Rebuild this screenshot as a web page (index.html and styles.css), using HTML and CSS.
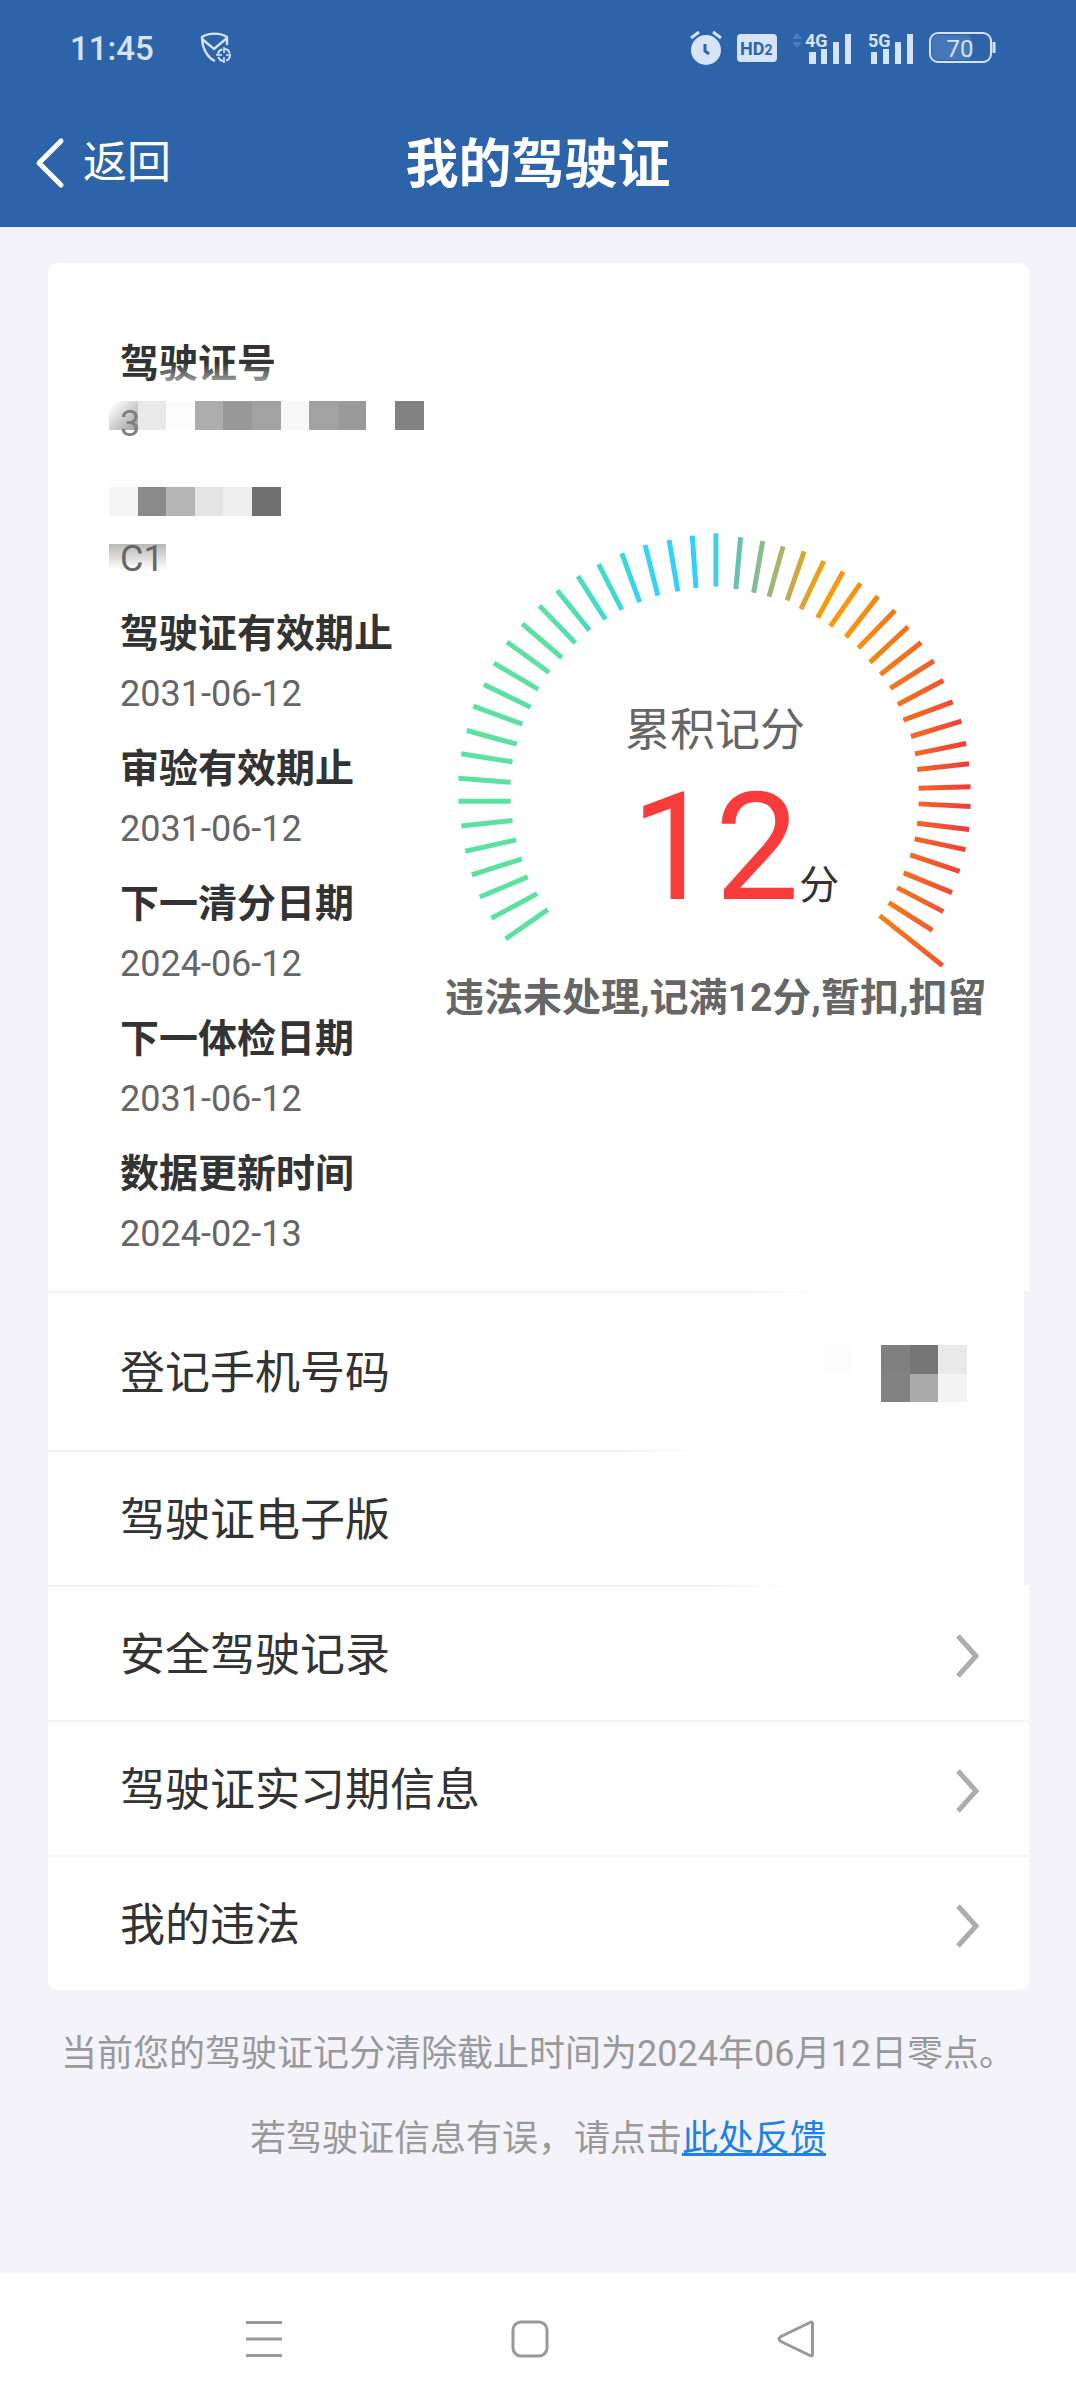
FILE: index.html
```html
<!DOCTYPE html>
<html lang="zh-CN">
<head>
<meta charset="utf-8">
<meta name="viewport" content="width=device-width, initial-scale=1">
<title>我的驾驶证</title>
<link rel="stylesheet" href="styles.css">
</head>
<body>
<header class="header">
  <div class="status">
    <div class="status-group">
      <span class="time">11:45</span>
      <svg class="icon" width="32" height="32" viewBox="0 0 32 32" fill="none" stroke="currentColor" stroke-width="2.4">
        <path d="M15 29C8 26 2 17 2 5C9 .5 20 .5 27 5V13M2 7L14 17L27 6"/>
        <circle cx="24" cy="23" r="6" stroke-width="2" stroke-dasharray="7 2.4"/>
        <path d="M24 15V21M24 25V31M16 23H22M26 23H31" stroke-width="1.6"/>
      </svg>
    </div>
    <div class="status-group status-right">
      <svg class="icon" width="32" height="34" viewBox="0 0 32 34">
        <circle cx="16" cy="19" r="15" fill="currentColor"/>
        <path d="M1 7L9 1M31 7L23 1" stroke="currentColor" stroke-width="3"/>
        <path d="M15 13V20L19 23" fill="none" stroke="#2d64a9" stroke-width="3"/>
      </svg>
      <svg class="icon" width="40" height="28" viewBox="0 0 40 28">
        <rect width="40" height="28" rx="4" fill="currentColor"/>
        <text class="hd" x="3" y="21">HD<tspan class="hd-sub">2</tspan></text>
      </svg>
      <svg class="icon" width="60" height="42" viewBox="0 0 60 42">
        <path d="M0 12L5 6L10 12ZM0 15L5 21L10 15Z" fill="#4a80bd"/>
        <path d="M17 25h7v12h-7zM29 22h6v15h-6zM41 15h6v22h-6zM53 7h6v30h-6z" fill="currentColor"/>
        <text class="net" x="13" y="20">4G</text>
      </svg>
      <svg class="icon" width="47" height="42" viewBox="0 0 47 42">
        <path d="M4 25h6v12h-6zM16 22h6v15h-6zM28 15h6v22h-6zM40 7h6v30h-6z" fill="currentColor"/>
        <text class="net" x="1" y="20">5G</text>
      </svg>
      <svg class="icon" width="67" height="32" viewBox="0 0 67 32">
        <rect x="1" y="1" width="61" height="29" rx="8" fill="none" stroke="currentColor" stroke-width="2"/>
        <rect x="3" y="3" width="40" height="25" rx="6" fill="#4577b8"/>
        <path d="M65 10V21" stroke="currentColor" stroke-width="3"/>
        <text class="battery" x="31" y="25" text-anchor="middle">70</text>
      </svg>
    </div>
  </div>
  <div class="titlebar">
    <button class="back" type="button">
      <svg width="30" height="52" viewBox="0 0 30 52" fill="none" stroke="currentColor" stroke-width="5" stroke-linecap="round" stroke-linejoin="round"><path d="M26 4L4 26L26 48"/></svg>
      返回
    </button>
    <h1 class="title">我的驾驶证</h1>
  </div>
</header>

<main class="main">
  <section class="card">
    <div class="info">
      <dl class="fields">
        <div class="field">
          <dt class="label fading">驾驶证号</dt>
          <dd class="value">
            <svg class="mosaic mosaic-number" width="315" height="29" viewBox="0 0 315 29" shape-rendering="crispEdges">
              <defs><linearGradient id="m1" x1="0" y1="0" x2="1" y2="1"><stop offset="0.1" stop-color="#fff"/><stop offset="1" stop-color="#9c9c9c"/></linearGradient></defs>
              <rect width="29" height="29" fill="url(#m1)"/>
              <rect x="29" width="28" height="29" fill="#e9e9e9"/>
              <rect x="57" width="29" height="29" fill="#fdfdfd"/>
              <rect x="86" width="28" height="29" fill="#adadad"/>
              <rect x="114" width="29" height="29" fill="#989898"/>
              <rect x="143" width="29" height="29" fill="#a2a2a2"/>
              <rect x="172" width="28" height="29" fill="#f8f8f8"/>
              <rect x="200" width="29" height="29" fill="#a2a2a2"/>
              <rect x="229" width="28" height="29" fill="#9a9a9a"/>
              <rect x="286" width="29" height="29" fill="#828282"/>
            </svg>
            <span class="value-text value-masked">3</span>
          </dd>
        </div>
        <div class="field">
          <dt class="label">
            <svg class="mosaic mosaic-label" width="172" height="29" viewBox="0 0 172 29" shape-rendering="crispEdges">
              <rect width="29" height="29" fill="#f5f5f5"/>
              <rect x="29" width="28" height="29" fill="#8a8a8a"/>
              <rect x="57" width="29" height="29" fill="#b5b5b5"/>
              <rect x="86" width="28" height="29" fill="#e4e4e4"/>
              <rect x="114" width="29" height="29" fill="#eee"/>
              <rect x="143" width="29" height="29" fill="#707070"/>
            </svg>
          </dt>
          <dd class="value">
            <svg class="mosaic mosaic-class" width="57" height="29" viewBox="0 0 57 29">
              <defs><linearGradient id="m2" x1="0" y1="0" x2="0" y2="1"><stop offset="0" stop-color="#b8b8b8"/><stop offset="0.9" stop-color="#fff"/></linearGradient></defs>
              <rect width="57" height="29" fill="url(#m2)"/>
            </svg>
            <span class="value-text">C1</span>
          </dd>
        </div>
        <div class="field"><dt class="label">驾驶证有效期止</dt><dd class="value">2031-06-12</dd></div>
        <div class="field"><dt class="label">审验有效期止</dt><dd class="value">2031-06-12</dd></div>
        <div class="field"><dt class="label">下一清分日期</dt><dd class="value">2024-06-12</dd></div>
        <div class="field"><dt class="label">下一体检日期</dt><dd class="value">2031-06-12</dd></div>
        <div class="field"><dt class="label">数据更新时间</dt><dd class="value">2024-02-13</dd></div>
      </dl>
      <div class="score">
        <div class="gauge">
          <svg class="dial" viewBox="80 60 1415 1310" preserveAspectRatio="none" fill="none">
            <defs>
              <linearGradient id="dial" gradientUnits="userSpaceOnUse" x1="80" y1="0" x2="1495" y2="0">
                <stop offset="0" stop-color="#5ce1a2"/>
                <stop offset="0.18" stop-color="#5ce1a2"/>
                <stop offset="0.27" stop-color="#45dcc4"/>
                <stop offset="0.37" stop-color="#34d4f2"/>
                <stop offset="0.46" stop-color="#30d0ff"/>
                <stop offset="0.5" stop-color="#3fcfe6"/>
                <stop offset="0.54" stop-color="#62c2b5"/>
                <stop offset="0.59" stop-color="#8cba8e"/>
                <stop offset="0.63" stop-color="#b3b262"/>
                <stop offset="0.67" stop-color="#d8a62e"/>
                <stop offset="0.72" stop-color="#fb9b05"/>
                <stop offset="0.77" stop-color="#f79410"/>
                <stop offset="0.84" stop-color="#f27a16"/>
                <stop offset="0.91" stop-color="#f1602a"/>
                <stop offset="0.96" stop-color="#f04a35"/>
                <stop offset="1" stop-color="#ee3842"/>
              </linearGradient>
            </defs>
            <path stroke="url(#dial)" stroke-width="5" vector-effect="non-scaling-stroke" d="M327 1198L211 1286M298 1150L172 1224M272 1100L140 1160M256 1046L118 1094M240 989L100 1023M230 931L89 947M225 873L81 873M225 816L81 804M230 755L89 731M242 702L104 661M257 642L122 588M280 591L151 523M301 538L179 459M331 487L215 396M366 443L257 341M403 399L304 287M442 361L353 241M486 328L410 198M531 299L467 162M580 276L531 130M630 257L595 105M685 244L661 90M735 234L725 77M790 229L790 70M845 237L858 82M894 248L919 93M936 260L975 109M986 271L1033 124M1024 297L1087 153M1070 323L1140 185M1105 349L1188 220M1148 381L1236 259M1182 414L1283 301M1214 457L1319 350M1243 493L1355 397M1270 535L1390 452M1291 583L1416 511M1306 630L1442 575M1327 679L1466 633M1338 731L1479 700M1344 778L1487 761M1348 834L1491 830M1348 881L1491 889M1344 939L1487 958M1337 986L1477 1018M1325 1034L1461 1083M1307 1088L1440 1147M1289 1132L1416 1204M1266 1177L1386 1260M1241 1216L1414 1366"/>
          </svg>
          <div class="reading">
            <span class="reading-label">累积记分</span>
            <span class="reading-value"><strong class="points">12</strong><span class="unit">分</span></span>
          </div>
        </div>
        <p class="state">违法未处理,记满12分,暂扣,扣留</p>
      </div>
    </div>
    <ul class="menu">
      <li class="row row-phone">
        <span>登记手机号码</span>
        <svg width="143" height="57" viewBox="0 0 143 57" shape-rendering="crispEdges">
          <rect width="29" height="29" fill="#fcfcfc"/>
          <rect x="57" width="29" height="29" fill="#808080"/>
          <rect x="86" width="28" height="29" fill="#757575"/>
          <rect x="114" width="29" height="29" fill="#e9e9e9"/>
          <rect x="57" y="29" width="29" height="28" fill="#828282"/>
          <rect x="86" y="29" width="28" height="28" fill="#aaa"/>
          <rect x="114" y="29" width="29" height="28" fill="#f3f3f3"/>
        </svg>
      </li>
      <li class="row row-card"><a class="link" href="#card">驾驶证电子版</a></li>
      <li class="row row-record"><a class="link" href="#record">安全驾驶记录
        <svg class="chevron" width="24" height="44" viewBox="0 0 24 44"><path d="M2 2L20 22L2 42"/></svg></a></li>
      <li class="row"><a class="link" href="#probation">驾驶证实习期信息
        <svg class="chevron" width="24" height="44" viewBox="0 0 24 44"><path d="M2 2L20 22L2 42"/></svg></a></li>
      <li class="row"><a class="link" href="#violations">我的违法
        <svg class="chevron" width="24" height="44" viewBox="0 0 24 44"><path d="M2 2L20 22L2 42"/></svg></a></li>
    </ul>
  </section>
  <div class="notes">
    <p class="note">当前您的驾驶证记分清除截止时间为2024年06月12日零点。</p>
    <p class="note">若驾驶证信息有误，请点击<a class="feedback" href="#feedback">此处反馈</a></p>
  </div>
</main>

<nav class="system">
  <button class="key" type="button" aria-label="最近任务"><svg width="38" height="38" viewBox="0 0 38 38"><path d="M1 2.500H37M1 19H37M1 35.500H37"/></svg></button>
  <button class="key" type="button" aria-label="主屏幕"><svg width="38" height="38" viewBox="0 0 38 38"><rect x="2" y="2" width="34" height="34" rx="8"/></svg></button>
  <button class="key" type="button" aria-label="后退"><svg width="38" height="38" viewBox="0 0 38 38"><path d="M33 2.500Q35.500 1 35.500 4V34Q35.500 37 33 35.500L4 21.500Q0 19 4 16.500Z"/></svg></button>
</nav>
</body>
</html>
```
FILE: styles.css
```css
* { box-sizing: border-box; margin: 0; padding: 0; }

body {
  min-height: 100vh;
  display: flex;
  flex-direction: column;
  background: #f3f3f9;
  color: #333;
  font-family: Roboto, "Noto Sans CJK SC", sans-serif;
}

button { border: 0; background: none; color: inherit; font: inherit; }
svg { display: block; flex: none; }

/* Header */
.header { background: #2d64a9; color: #fff; }
.status {
  display: flex;
  justify-content: space-between;
  align-items: center;
  height: 96px;
  padding: 0 80px 0 70px;
  color: #d6e4fa;
}
.status-group { display: flex; align-items: center; gap: 46px; }
.status-right { gap: 15px; }
.time { font-size: 33px; font-weight: 500; }
.hd { font-size: 18px; font-weight: 700; fill: #2d64a9; }
.hd-sub { font-size: 14px; }
.net { font-size: 18px; font-weight: 700; fill: currentColor; stroke: #2d64a9; stroke-width: 3px; paint-order: stroke; }
.battery { font-size: 24px; fill: currentColor; }
.titlebar {
  display: grid;
  grid-template-columns: 1fr auto 1fr;
  align-items: center;
  height: 131px;
  padding: 2px 35px 0;
}
.back { display: flex; align-items: center; gap: 18px; font-size: 44px; line-height: 60px; }
.title { padding-top: 4px; font-size: 53px; line-height: 80px; font-weight: 700; }

/* Licence card */
.main { flex: 1; }
.card {
  margin: 36px 47px 0 48px;
  background: #fff;
  border-radius: 10px;
  overflow: hidden;
}
.info {
  display: flex;
  justify-content: space-between;
  padding: 70px 44px 28px 72px;
}
.fields { display: flex; flex-direction: column; gap: 15px; }
.label { position: relative; min-height: 62px; font-size: 39px; line-height: 62px; font-weight: 700; white-space: nowrap; }
.value { position: relative; font-size: 36px; line-height: 58px; color: #666; }
.value-text { position: relative; }
.value-masked { color: #808080; }
.mosaic { position: absolute; left: -11px; }
.mosaic-number { top: 6px; }
.mosaic-label { top: 19px; }
.mosaic-class { top: 14px; }
.fading::after {
  content: "";
  position: absolute;
  inset: 30px 0 0 40px;
  background: linear-gradient(rgba(255, 255, 255, 0), rgba(255, 255, 255, 0.9));
}

/* Score gauge */
.score { width: 540px; padding-top: 197px; }
.gauge { display: grid; justify-items: center; }
.dial { grid-area: 1 / 1; width: 514px; height: 437px; }
.reading {
  grid-area: 1 / 1;
  display: flex;
  flex-direction: column;
  align-items: center;
  gap: 12px;
  padding-top: 171px;
}
.reading-label { font-size: 45px; line-height: 60px; color: #666; }
.reading-value { display: flex; align-items: baseline; padding-left: 40px; }
.points { font-size: 150px; line-height: 150px; font-weight: 400; color: #f83c3c; }
.unit { font-size: 40px; line-height: 60px; }
.state { font-size: 39px; line-height: 62px; font-weight: 700; color: #666; text-align: center; white-space: nowrap; }

/* Menu rows */
.menu { list-style: none; }
.row {
  --line-end: 100%;
  display: flex;
  align-items: center;
  justify-content: space-between;
  min-height: 135px;
  padding: 6px 49px 0 72px;
  background: linear-gradient(90deg, #f3f3f3 calc(var(--line-end) - 80px), transparent var(--line-end)) top / 100% 2px no-repeat;
  font-size: 45px;
  line-height: 60px;
}
.row + .row { --line-end: calc(100% + 80px); }
.row-phone { --line-end: 80%; min-height: 159px; padding-right: 57px; }
.row.row-card { --line-end: 67%; }
.row.row-record { --line-end: 76%; }
.row-phone, .row-card { border-right: 5px solid #f3f3f9; }
.link {
  flex: 1;
  display: flex;
  align-items: center;
  justify-content: space-between;
  color: inherit;
  text-decoration: none;
}
.chevron { fill: none; stroke: #adadad; stroke-width: 5px; }

/* Notes */
.notes { padding: 22px 16px 0; text-align: center; }
.note { font-size: 36px; line-height: 85px; color: #999; }
.feedback { color: #2080e8; text-decoration: underline; }

/* System navigation */
.system {
  display: flex;
  justify-content: center;
  height: 131px;
  padding-right: 16px;
  background: #fff;
}
.key { width: 266px; display: flex; align-items: center; justify-content: center; }
.key svg { fill: none; stroke: #999; stroke-width: 3px; }
```
